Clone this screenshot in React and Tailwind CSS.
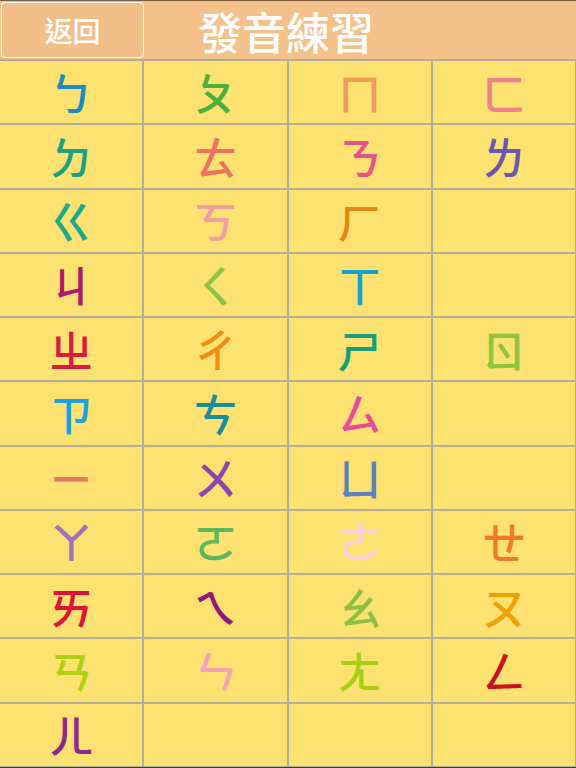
import React from "react";

const cells = [
  ["ㄅ", "#1b8cc2"], ["ㄆ", "#4cb03a"], ["ㄇ", "#f29a5a"], ["ㄈ", "#ee8090"],
  ["ㄉ", "#17a084"], ["ㄊ", "#ec7262"], ["ㄋ", "#e8528a"], ["ㄌ", "#6a58b0"],
  ["ㄍ", "#1aa98e"], ["ㄎ", "#f0a0a0"], ["ㄏ", "#e08a12"], ["", ""],
  ["ㄐ", "#b0186a"], ["ㄑ", "#8bc34a"], ["ㄒ", "#1aa0d2"], ["", ""],
  ["ㄓ", "#d81b42"], ["ㄔ", "#f08c12"], ["ㄕ", "#16a07a"], ["ㄖ", "#8cc63f"],
  ["ㄗ", "#1aa2e2"], ["ㄘ", "#168f9c"], ["ㄙ", "#e84a9a"], ["", ""],
  ["ㄧ", "#f07266"], ["ㄨ", "#8e44ad"], ["ㄩ", "#5b80c4"], ["", ""],
  ["ㄚ", "#a070b8"], ["ㄛ", "#5cb85c"], ["ㄜ", "#f8d2d2"], ["ㄝ", "#f07a2a"],
  ["ㄞ", "#e0123c"], ["ㄟ", "#8e1a7c"], ["ㄠ", "#8cc042"], ["ㄡ", "#f0a000"],
  ["ㄢ", "#b0d012"], ["ㄣ", "#f4a2b8"], ["ㄤ", "#a8d012"], ["ㄥ", "#cc1222"],
  ["ㄦ", "#8a2a8a"], ["", ""], ["", ""], ["", ""],
];

const font = { fontFamily: '"Noto Sans CJK TC", "Noto Sans", sans-serif' };

export default function App() {
  return (
    <div className="w-[576px] h-[768px] overflow-hidden flex flex-col bg-[#b3ad9c]" style={font}>
      <header className="relative h-[59px] shrink-0 bg-[#f5c18a] border-t border-[#7a5a3a] flex items-center justify-center">
        <button className="absolute left-[1px] top-[1px] w-[143px] h-[56px] rounded-[4px] border border-white bg-[#f3bf88] text-white text-[28px] font-medium leading-[1.3]">
          返回
        </button>
        <h1 className="text-white text-[44px] font-medium leading-[1.2] -ml-[4px] pt-[2px]">發音練習</h1>
      </header>
      <div className="flex-1 grid grid-cols-4 grid-rows-11 gap-[2px] pt-[2px] pr-[1px] pb-[1px] border-b border-[#3a3a3a]">
        {cells.map(([ch, color], i) => (
          <div key={i} className="bg-[#fde271] flex items-center justify-center">
            <span className="text-[44px] font-medium leading-[1.3]" style={{ color }}>{ch}</span>
          </div>
        ))}
      </div>
    </div>
  );
}
